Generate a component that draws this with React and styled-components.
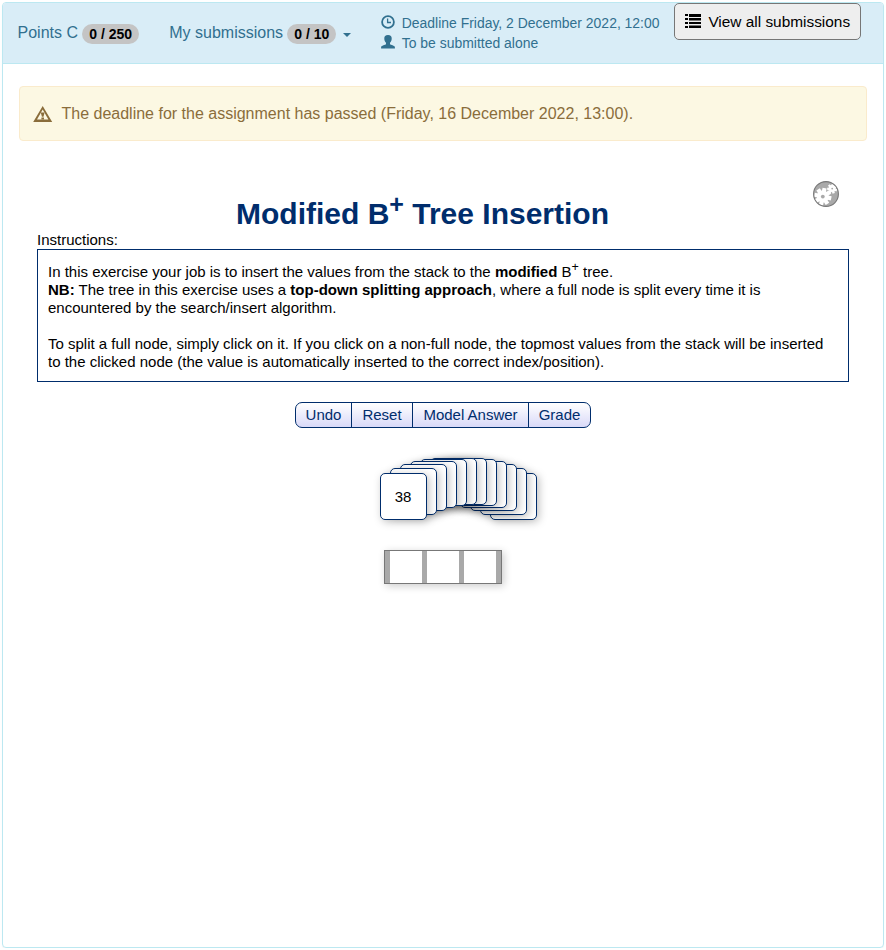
import React from "react";
import styled, { createGlobalStyle } from "styled-components";

const Global = createGlobalStyle`
  * { box-sizing: border-box; }
  body { margin: 0; background: #fff; font-family: "Liberation Sans", Arial, sans-serif; color: #000; }
`;

const Panel = styled.div`
  margin: 2px 2px 0;
  height: 946px;
  border: 1px solid #bce8f1;
  border-radius: 4px;
  box-shadow: 0 1px 1px rgba(0, 0, 0, 0.05);
  display: flex;
  flex-direction: column;
`;

const Header = styled.header`
  display: flex;
  align-items: flex-start;
  height: 61px;
  background: #d9edf7;
  border-bottom: 1px solid #bce8f1;
  border-radius: 3px 3px 0 0;
  color: #31708f;
  font-size: 16px;
`;

const Stat = styled.div`
  display: flex;
  align-items: center;
  height: 22px;
  line-height: 22px;
  margin: 19px 0 0 ${(p) => p.$gap}px;
  white-space: nowrap;
`;

const Badge = styled.span`
  margin: 2px 0 0 4.3px;
  width: ${(p) => p.$w}px;
  height: 20px;
  border-radius: 10px;
  background: #c4c4c4;
  color: #000;
  font-size: 14px;
  font-weight: bold;
  line-height: 20px;
  text-align: center;
`;

const Caret = styled.span`
  margin: 3px 0 0 7px;
  border-top: 4px solid #31708f;
  border-left: 4px solid transparent;
  border-right: 4px solid transparent;
`;

const Facts = styled.div`
  margin: 10px 0 0 30px;
  width: 293px;
  font-size: 13.95px;
  line-height: 20px;
`;

const Fact = styled.div`
  display: flex;
  white-space: nowrap;
  svg { width: 14px; height: 14px; margin: 2px 6.4px 0 0; flex: none; }
`;

const ViewButton = styled.button`
  display: flex;
  align-items: center;
  gap: 7px;
  width: 187px;
  height: 37px;
  padding: 0 0 0 10px;
  border: 1px solid #767676;
  border-radius: 5px;
  background: #eee;
  color: #000;
  font: 15.4px "Liberation Sans", Arial, sans-serif;
  white-space: nowrap;
  svg { margin-bottom: 2px; }
`;

const Alert = styled.div`
  display: flex;
  align-items: center;
  margin: 22px 16px 0;
  height: 55px;
  padding-left: 13px;
  border: 1px solid #faebcc;
  border-radius: 4px;
  background: #fcf8e3;
  color: #8a6d3b;
  font-size: 16px;
  gap: 8.5px;
`;

const Exercise = styled.main`
  margin: 40px 34px 0;
  font-size: 15px;
  line-height: 18px;
`;

const TitleRow = styled.div`
  display: flex;
  height: 50px;
`;

const Title = styled.h1`
  flex: 1;
  margin: 13px 0 0 -5px;
  color: #002d6c;
  text-align: center;
  font-size: 30px;
  line-height: 40px;
  white-space: nowrap;
  sup { font-size: 25px; line-height: 0; }
`;

const Settings = styled.div`
  width: 26px;
  margin-right: 10px;
`;

const Instructions = styled.section`
  height: 133px;
  padding: 13px 10px 0;
  border: 1px solid #002d6c;
  sup { font-size: 12.5px; line-height: 0; }
`;

const Line = styled.div`
  height: 18px;
  white-space: nowrap;
`;

const Toolbar = styled.div`
  display: flex;
  width: 296px;
  height: 26px;
  margin: 20px auto 0;
  border: 1px solid #002d6c;
  border-radius: 7px;
  background: linear-gradient(#fff, #d9d9f8);
`;

const Tool = styled.button`
  width: ${(p) => p.$w}px;
  padding: 0 0 2px;
  border: 0;
  border-left: ${(p) => (p.$first ? 0 : 1)}px solid #002d6c;
  background: transparent;
  color: #002d6c;
  font: 15px "Liberation Sans", Arial, sans-serif;
  white-space: nowrap;
`;

const Stack = styled.div`
  position: relative;
  width: 157px;
  height: 62px;
  margin: 30px 0 0 343px;
`;

const Card = styled.div`
  position: absolute;
  left: ${(p) => p.$x}px;
  top: ${(p) => p.$y}px;
  width: 47px;
  height: 47px;
  border: 1px solid #002d6c;
  border-radius: 5px;
  background: #fff;
  box-shadow: 2px 2px 8px rgba(0, 0, 0, 0.25);
  line-height: 46px;
  padding-right: 1px;
  text-align: center;
`;

const TreeNode = styled.div`
  display: flex;
  justify-content: space-between;
  width: 118px;
  height: 34px;
  margin: 30px 0 0 347px;
  border: 1px solid #777;
  box-shadow: 2px 2px 8px rgba(0, 0, 0, 0.2);
`;

const Pointer = styled.div`
  width: 5px;
  background: #a9a9a9;
`;

const Slot = styled.div`
  width: 32px;
  background: #fff;
`;

const ClockIcon = () => (
  <svg viewBox="0 0 14 14" fill="none" stroke="currentColor">
    <circle cx="7" cy="7" r="5.9" strokeWidth="1.8" />
    <path d="M6.6 3.5V7.5H10" strokeWidth="1.3" />
  </svg>
);

const UserIcon = () => (
  <svg viewBox="0 0 14 14" fill="currentColor">
    <path d="M7 0C4.4 0 3.2 1.4 3.3 3.5C3.3 5.5 4.1 6.9 5 7.8V9.2C4.2 9.9 .5 10.5 .1 11.8V13.4H13.9V11.8C13.5 10.5 9.8 9.9 9 9.2V7.8C9.9 6.9 10.7 5.5 10.7 3.5C10.8 1.4 9.6 0 7 0Z" />
  </svg>
);

const ListIcon = () => (
  <svg width="16" height="16" viewBox="0 0 16 16" fill="currentColor">
    <path d="M0 1h3v2H0zM4 1h12v3H4zM0 5h3v2H0zM4 5h12v2.6H4zM0 9h3v2H0zM4 9h12v2H4zM0 13h3v2H0zM4 12.6h12v2.4H4z" />
  </svg>
);

const WarningIcon = () => (
  <svg width="20" height="18" viewBox="0 0 20 18" fill="currentColor">
    <path fillRule="evenodd" d="M9.7 1 19.2 17H.2ZM9.7 4.6 4 14.6H15.4Z" />
    <path d="M7.8 7.6H11.6L10.5 11.8H8.9zM8.4 12.5H11V14.6H8.4z" />
  </svg>
);

const Cog = ({ x, y, r, teeth, hole, turn }) => (
  <g transform={`translate(${x} ${y})`}>
    {Array.from({ length: teeth }, (_, i) => (
      <rect
        key={i}
        x={-r * 0.24}
        y={-r}
        width={r * 0.48}
        height={r}
        fill="#fff"
        transform={`rotate(${(i * 360) / teeth + turn})`}
      />
    ))}
    <circle r={r * 0.7} fill="#fff" />
    <circle r={hole} fill="#a9a9a9" />
  </g>
);

const GearsIcon = () => (
  <svg width="26" height="26" viewBox="0 0 26 26">
    <circle cx="13" cy="13" r="12.4" fill="#a9a9a9" />
    <Cog x={9.8} y={15.6} r={8.6} teeth={8} hole={1.9} turn={12} />
    <Cog x={19.2} y={7.6} r={5} teeth={7} hole={0.9} turn={8} />
    <circle cx="13" cy="13" r="12.4" fill="none" stroke="#777" strokeWidth="1.1" />
  </svg>
);

const heights = [15, 10, 6, 3, 1, 0, 0, 1, 3, 6, 10, 15];
const cards = heights.map((y, i) => ({ x: i * 10, y, value: i === 0 ? "38" : "" })).reverse();

export default function App() {
  return (
    <>
      <Global />
      <Panel>
        <Header>
          <Stat $gap={14.5}>
            Points C<Badge $w={57}>0 / 250</Badge>
          </Stat>
          <Stat $gap={30}>
            My submissions<Badge $w={49}>0 / 10</Badge>
            <Caret />
          </Stat>
          <Facts>
            <Fact><ClockIcon />Deadline Friday, 2 December 2022, 12:00</Fact>
            <Fact><UserIcon />To be submitted alone</Fact>
          </Facts>
          <ViewButton><ListIcon />View all submissions</ViewButton>
        </Header>
        <Alert>
          <WarningIcon />
          The deadline for the assignment has passed (Friday, 16 December 2022, 13:00).
        </Alert>
        <Exercise>
          <TitleRow>
            <Title>Modified B<sup>+</sup> Tree Insertion</Title>
            <Settings><GearsIcon /></Settings>
          </TitleRow>
          <Line>Instructions:</Line>
          <Instructions>
            <Line>In this exercise your job is to insert the values from the stack to the <b>modified</b> B<sup>+</sup> tree.</Line>
            <Line><b>NB:</b> The tree in this exercise uses a <b>top-down splitting approach</b>, where a full node is split every time it is</Line>
            <Line>encountered by the search/insert algorithm.</Line>
            <Line />
            <Line>To split a full node, simply click on it. If you click on a non-full node, the topmost values from the stack will be inserted</Line>
            <Line>to the clicked node (the value is automatically inserted to the correct index/position).</Line>
          </Instructions>
          <Toolbar>
            <Tool $w={55} $first>Undo</Tool>
            <Tool $w={61}>Reset</Tool>
            <Tool $w={116}>Model Answer</Tool>
            <Tool $w={62}>Grade</Tool>
          </Toolbar>
          <Stack>
            {cards.map((c) => (
              <Card key={c.x} $x={c.x} $y={c.y}>{c.value}</Card>
            ))}
          </Stack>
          <TreeNode>
            <Pointer /><Slot /><Pointer /><Slot /><Pointer /><Slot /><Pointer />
          </TreeNode>
        </Exercise>
      </Panel>
    </>
  );
}
